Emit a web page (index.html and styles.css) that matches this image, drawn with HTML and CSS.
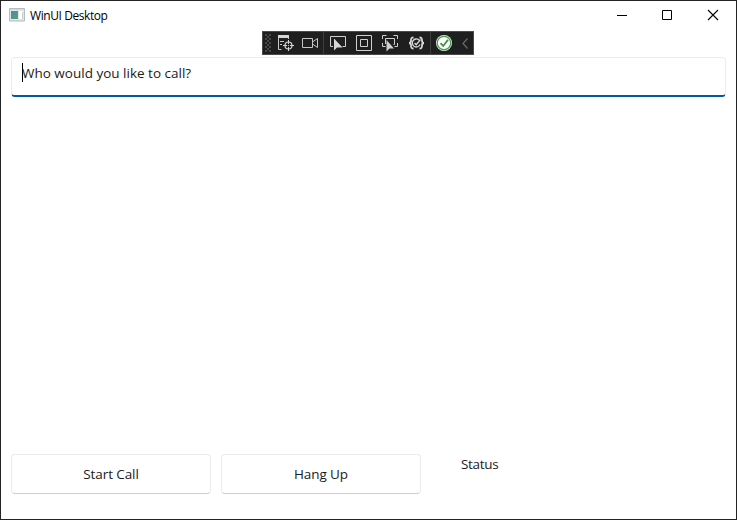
FILE: index.html
```html
<!DOCTYPE html>
<html lang="en">
<head>
<meta charset="utf-8">
<title>WinUI Desktop</title>
<link rel="stylesheet" href="styles.css">
</head>
<body>
<div class="window">
  <header class="titlebar">
    <svg class="app-icon" width="16" height="14" viewBox="0 0 16 14">
      <defs><linearGradient id="pane" x2="1" y2="1"><stop offset="0" stop-color="#4c8aa8"/><stop offset="1" stop-color="#55a276"/></linearGradient></defs>
      <path d="M.5.5h15v12.500H.5z" fill="#e2e6e8" stroke="#b4babd"/>
      <path d="M1 1h14v1H1z" fill="#d4dadd"/>
      <path d="M2 3h7v8H2z" fill="url(#pane)"/>
      <path d="M10 3h4v8h-4z" fill="#fff"/><path d="M13 4h1v7h-1z" fill="#c9d1d5"/>
    </svg>
    <span class="title">WinUI Desktop</span>
    <div class="caption-buttons">
      <svg width="46" height="29" viewBox="0 0 46 29"><path d="M17 14.500h10" stroke="#000"/></svg>
      <svg width="45" height="29" viewBox="0 0 45 29"><path d="M16.500 9.500h9v9h-9z" fill="none" stroke="#000"/></svg>
      <svg width="45" height="29" viewBox="0 0 45 29"><path d="M17 9l10 10M27 9L17 19" stroke="#000" stroke-width="1.100"/></svg>
    </div>
  </header>

  <main class="content">
    <div class="textbox"><span class="caret"></span><span class="placeholder">Who would you like to call?</span></div>
    <div class="actions">
      <div class="button"><span class="start">Start Call</span></div>
      <div class="button"><span class="hang">Hang Up</span></div>
      <span class="status">Status</span>
    </div>
  </main>

  <div class="debugbar">
    <span class="grip"></span>
    <svg width="25" height="22" viewBox="273 32 25 22">
      <path d="M278 35h11v3h-11z" fill="#d5d5d5"/>
      <path d="M278.500 38v11.500h3M288.500 38v1M280 41.500h4M280 44.500h2" fill="none" stroke="#c8c8c8"/>
      <circle cx="288.500" cy="45.500" r="3.500" fill="none" stroke="#d8d8d8" stroke-width="1.200"/>
      <path d="M288.500 40v4M288.500 47v4M283 45.500h4M290 45.500h4" stroke="#d8d8d8"/>
      <circle cx="288.500" cy="45.500" r=".6" fill="#ddd"/>
    </svg>
    <svg width="25" height="22" viewBox="298 32 25 22"><path d="M302.500 38.500h10v9h-10zM312.500 42l5-3.500v9l-5-3.500z" fill="none" stroke="#c8c8c8"/></svg>
    <i class="sep"></i>
    <svg width="27" height="22" viewBox="324 32 27 22">
      <path d="M333 46.500h-2.500v-10h15v10h-3" fill="none" stroke="#d0d0d0"/>
      <path d="M334 38.500v12l3-3h5.500z" fill="#d8d8d8"/>
    </svg>
    <svg width="26" height="22" viewBox="351 32 26 22"><path d="M356.500 35.500h15v15h-15zM360.500 39.500h7v7h-7z" fill="none" stroke="#d0d0d0"/></svg>
    <svg width="26" height="22" viewBox="377 32 26 22">
      <path d="M382.500 39v-3.500h4M393.500 35.500h4V39M382.500 43v3.500h3M397.500 43v3.500h-3M385.500 44v-5.500h9v6h-1" fill="none" stroke="#d0d0d0"/>
      <path d="M386.500 40v11.500l3-3h4.500z" fill="#d0d0d0"/>
    </svg>
    <svg width="27" height="22" viewBox="403 32 27 22">
      <path d="M413.500 37.500c-2.500 0-2.500 1-2.500 3 0 1.500-.5 2.500-2 2.500 1.500 0 2 1 2 2.500 0 2 0 3 2.500 3M419.500 37.500c2.500 0 2.500 1 2.500 3 0 1.500.5 2.500 2 2.500-1.500 0-2 1-2 2.500 0 2 0 3-2.500 3" fill="none" stroke="#d8d8d8" stroke-width="1.800"/>
      <path d="M419 40a4 4 0 1 0 1 4.500M414.500 43l1.700 1.700 4.300-5.200" fill="none" stroke="#d8d8d8" stroke-width="1.300"/>
    </svg>
    <i class="sep"></i>
    <svg width="26" height="22" viewBox="431 32 26 22">
      <circle cx="444" cy="43" r="8" fill="#e6eee6"/>
      <circle cx="444" cy="43" r="6.700" fill="#fff" stroke="#43a04b" stroke-width="1.200"/>
      <path d="M440.500 43.200l2.700 2.800 4.800-6.200" fill="none" stroke="#36913f" stroke-width="1.800"/>
    </svg>
    <svg width="16" height="22" viewBox="457 32 16 22"><path d="M467.500 38.500l-4.500 5 4.500 5" fill="none" stroke="#6a6a6a" stroke-width="1.200"/></svg>
  </div>
</div>
</body>
</html>
```
FILE: styles.css
```css
* { box-sizing: border-box; }
body { margin: 0; font-family: "Open Sans", "Noto Sans", sans-serif; background: #fff; }
.window {
  position: relative;
  width: 737px;
  height: 520px;
  border: 1px solid #232323;
  display: flex;
  flex-direction: column;
  background: #fff;
}
.titlebar { height: 29px; display: flex; align-items: center; padding-left: 8px; }
.titlebar svg { display: block; }
.titlebar .app-icon { margin-bottom: 2px; }
.title {
  margin-left: 5px;
  font-size: 12px;
  line-height: 16px;
  letter-spacing: -.42px;
  color: #000;
  white-space: nowrap;
}
.caption-buttons { display: flex; margin-left: auto; }
.content {
  flex: 1;
  display: flex;
  flex-direction: column;
  justify-content: space-between;
  padding: 27px 10px 25px;
  font-size: 13.500px;
  color: #1b1b1b;
}
.textbox {
  height: 40px;
  display: flex;
  align-items: flex-start;
  padding: 5px 10px;
  border: 1px solid #ececec;
  border-bottom: 2px solid #005a9e;
  border-radius: 4px;
}
.caret { width: 1px; height: 19px; background: #000; margin-right: -1px; }
.placeholder { line-height: 20px; letter-spacing: 0; white-space: nowrap; }
.actions { display: flex; gap: 10px; align-items: flex-start; }
.button {
  width: 200px;
  height: 40px;
  display: flex;
  align-items: center;
  justify-content: center;
  border: 1px solid #ebebeb;
  border-bottom-color: #cfcfcf;
  border-radius: 4px;
}
.start, .hang, .status { line-height: 20px; }
.start { letter-spacing: -.1px; }
.hang { letter-spacing: -.1px; }
.status { margin-left: 30px; letter-spacing: -.3px; }
.debugbar {
  position: absolute;
  top: 30px;
  left: 261px;
  width: 212px;
  height: 24px;
  display: flex;
  border: 1px solid #4a4a4a;
  background: #1f1f1f;
}
.debugbar svg { display: block; flex: none; }
.grip {
  width: 6px;
  height: 18px;
  margin: 2px 2px;
  background-image: radial-gradient(circle at 1px 1px, #484848 .7px, transparent 1px), radial-gradient(circle at 3px 3px, #484848 .7px, transparent 1px);
  background-size: 4px 4px;
}
.sep { width: 1px; height: 22px; background: #3d3d3d; flex: none; }
```
